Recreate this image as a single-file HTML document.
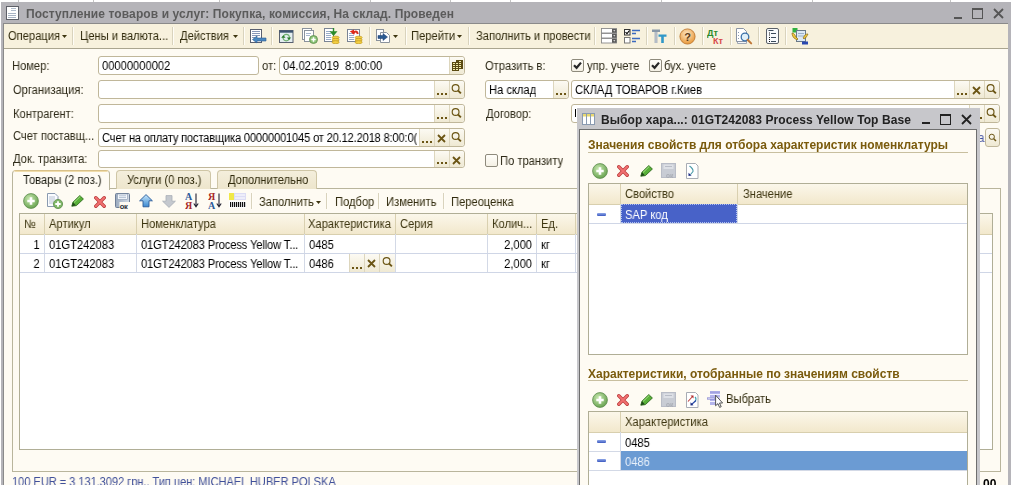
<!DOCTYPE html><html><head><meta charset="utf-8"><style>
html,body{margin:0;padding:0}
body{width:1011px;height:485px;overflow:hidden;position:relative;background:#ffffff;font:11px 'Liberation Sans', sans-serif}
.t{position:absolute;white-space:pre;will-change:transform}
.r{position:absolute;display:block}
</style></head><body>
<div class="r" style="left:18px;top:0px;width:1px;height:2px;background:#c4c4c4;"></div>
<div class="r" style="left:93px;top:0px;width:1px;height:2px;background:#c4c4c4;"></div>
<div class="r" style="left:219px;top:0px;width:1px;height:2px;background:#c4c4c4;"></div>
<div class="r" style="left:370px;top:0px;width:1px;height:2px;background:#c4c4c4;"></div>
<div class="r" style="left:450px;top:0px;width:1px;height:2px;background:#c4c4c4;"></div>
<div class="r" style="left:510px;top:0px;width:1px;height:2px;background:#c4c4c4;"></div>
<div class="r" style="left:661px;top:0px;width:1px;height:2px;background:#c4c4c4;"></div>
<div class="r" style="left:812px;top:0px;width:1px;height:2px;background:#c4c4c4;"></div>
<div class="r" style="left:950px;top:0px;width:1px;height:2px;background:#c4c4c4;"></div>
<div class="r" style="left:1px;top:2px;width:1010px;height:483px;background:#b5b4b9;"></div>
<div class="r" style="left:3px;top:23px;width:1005px;height:462px;background:#8a8a8a;"></div>
<div class="r" style="left:4px;top:24px;width:1004px;height:461px;background:#fefbf3;"></div>
<div class="r" style="left:4px;top:24px;width:1004px;height:24px;background:#f7f1dd;"></div>
<div class="r" style="left:4px;top:48px;width:1004px;height:1px;background:#aaa58f;"></div>
<svg class="r" style="left:6px;top:6px" width="14" height="14" viewBox="0 0 14 14"><rect x="0.5" y="0.5" width="12" height="13" fill="#fff" stroke="#5e6068"/><path d="M5 2.5h5M5 4.5h5" stroke="#b0bccc"/><path d="M2 7.5h8M2 9.5h8M2 11.5h8" stroke="#a8b4c4"/></svg>
<div class="t" style="left:26px;top:7.34px;font:bold 12px 'Liberation Sans', sans-serif;line-height:15px;color:#5b5b5b;letter-spacing:0.1px">Поступление товаров и услуг: Покупка, комиссия, На склад. Проведен</div>
<div class="r" style="left:954px;top:17px;width:8px;height:2px;background:#555;"></div>
<div class="r" style="left:972px;top:8px;width:11px;height:11px;border:1px solid #555;border-top-width:2px;box-sizing:border-box;"></div>
<svg class="r" style="left:993px;top:8px" width="11" height="11" viewBox="0 0 11 11"><path d="M1 1L10 10M10 1L1 10" stroke="#555" stroke-width="1.8" /></svg>
<div class="t" style="left:8px;top:29.34px;font:12px 'Liberation Sans', sans-serif;line-height:15px;color:#302a0c;transform:scaleX(0.93);transform-origin:left top;">Операция</div>
<svg class="r" style="left:62px;top:35px" width="5" height="3" viewBox="0 0 5 3"><path d="M0 0H5L2.5 3Z" fill="#3d3510"/></svg>
<div class="r" style="left:72px;top:27px;width:1px;height:18px;background:#d9d3bd;"></div>
<div class="r" style="left:73px;top:27px;width:1px;height:18px;background:#fffdf6;"></div>
<div class="t" style="left:80px;top:29.34px;font:12px 'Liberation Sans', sans-serif;line-height:15px;color:#302a0c;transform:scaleX(0.93);transform-origin:left top;">Цены и валюта...</div>
<div class="r" style="left:172px;top:27px;width:1px;height:18px;background:#d9d3bd;"></div>
<div class="r" style="left:173px;top:27px;width:1px;height:18px;background:#fffdf6;"></div>
<div class="t" style="left:180px;top:29.34px;font:12px 'Liberation Sans', sans-serif;line-height:15px;color:#302a0c;transform:scaleX(0.93);transform-origin:left top;">Действия</div>
<svg class="r" style="left:233px;top:35px" width="5" height="3" viewBox="0 0 5 3"><path d="M0 0H5L2.5 3Z" fill="#3d3510"/></svg>
<div class="r" style="left:243px;top:27px;width:1px;height:18px;background:#d9d3bd;"></div>
<div class="r" style="left:244px;top:27px;width:1px;height:18px;background:#fffdf6;"></div>
<svg class="r" style="left:249px;top:28px" width="18" height="16" viewBox="0 0 18 16"><rect x="1.5" y="1.5" width="11" height="13" fill="#fff" stroke="#5a6070"/><path d="M3 3.5h8M3 5.5h8M3 7.5h8M3 9.5h3" stroke="#8898b8" stroke-width="1"/><path d="M3.5 11.5L8 8V10H17V13H8V15z" fill="#4a88c0" stroke="#2a5a90" stroke-width=".6"/></svg>
<div class="r" style="left:271px;top:27px;width:1px;height:18px;background:#d9d3bd;"></div>
<div class="r" style="left:272px;top:27px;width:1px;height:18px;background:#fffdf6;"></div>
<svg class="r" style="left:279px;top:30px" width="15" height="13" viewBox="0 0 15 13"><rect x="0.5" y="0.5" width="13.5" height="12" fill="#e4eef0" stroke="#586070"/><rect x="0.5" y="0.5" width="13.5" height="2.2" fill="#3c5470"/><circle cx="7.2" cy="7.6" r="3.2" fill="none" stroke="#70b070" stroke-width="1.2"/><path d="M2.2 7.8L4.4 5.2 6.6 7.8z" fill="#2a7a2a"/><path d="M7.8 7.4L10 10 12.2 7.4z" fill="#2a7a2a"/></svg>
<svg class="r" style="left:302px;top:28px" width="16" height="16" viewBox="0 0 16 16"><rect x="0.5" y="0.5" width="9" height="11" fill="#fff" stroke="#8a929c"/><rect x="2.5" y="2.5" width="9" height="11" fill="#fff" stroke="#8a929c"/><path d="M4 5.5h5M4 7.5h4" stroke="#a8b8d0" stroke-width="1"/><circle cx="11.5" cy="11.5" r="4" fill="#8cc478" stroke="#5a8a4a" stroke-width=".8"/><path d="M9.3 11.5h4.4M11.5 9.3v4.4" stroke="#fff" stroke-width="1.5"/></svg>
<svg class="r" style="left:324px;top:28px" width="16" height="16" viewBox="0 0 16 16"><rect x="0.5" y="0.5" width="9" height="13" fill="#fff" stroke="#7a8494"/><path d="M2 3.5h5M2 5.5h5M2 7.5h5M2 9.5h5M2 11.5h5" stroke="#98acc8" stroke-width="1"/><path d="M9.5 0v4M7 4h5L9.5 7z" stroke="#2a8a2a" stroke-width="1.4" fill="#2a8a2a"/><ellipse cx="11.6" cy="9.6" rx="3.6" ry="1.5" fill="#f4d040" stroke="#b89020" stroke-width=".6"/><ellipse cx="11.6" cy="11.899999999999999" rx="3.6" ry="1.5" fill="#f4d040" stroke="#b89020" stroke-width=".6"/><ellipse cx="11.6" cy="14.2" rx="3.6" ry="1.5" fill="#f4d040" stroke="#b89020" stroke-width=".6"/></svg>
<svg class="r" style="left:347px;top:28px" width="16" height="16" viewBox="0 0 16 16"><rect x="0.5" y="1.5" width="12" height="12" fill="#fff" stroke="#7a8494"/><path d="M2 5.5h5M2 7.5h5M2 9.5h5M2 11.5h5" stroke="#98acc8" stroke-width="1"/><path d="M6 6C7.5 2.5 10 2.5 10.8 6" stroke="#d83020" stroke-width="2" fill="none"/><path d="M2.8 3.6L7 1.4 7.4 6.6z" fill="#e02818"/><ellipse cx="11.6" cy="9.6" rx="3.6" ry="1.5" fill="#f4d040" stroke="#b89020" stroke-width=".6"/><ellipse cx="11.6" cy="11.899999999999999" rx="3.6" ry="1.5" fill="#f4d040" stroke="#b89020" stroke-width=".6"/><ellipse cx="11.6" cy="14.2" rx="3.6" ry="1.5" fill="#f4d040" stroke="#b89020" stroke-width=".6"/></svg>
<div class="r" style="left:369px;top:27px;width:1px;height:18px;background:#d9d3bd;"></div>
<div class="r" style="left:370px;top:27px;width:1px;height:18px;background:#fffdf6;"></div>
<svg class="r" style="left:376px;top:29px" width="15" height="14" viewBox="0 0 15 14"><rect x="0.5" y="0.5" width="7" height="11" fill="#fff" stroke="#8a929c"/><path d="M4.5 3.5h6l3 3v7h-9z" fill="#fff" stroke="#8a929c"/><path d="M2 6.5h5V4.5l4.5 3.5L7 11.5V9.5H2z" fill="#2a5a90" stroke="#1a3a70" stroke-width=".5"/></svg>
<svg class="r" style="left:393px;top:35px" width="5" height="3" viewBox="0 0 5 3"><path d="M0 0H5L2.5 3Z" fill="#3d3510"/></svg>
<div class="r" style="left:405px;top:27px;width:1px;height:18px;background:#d9d3bd;"></div>
<div class="r" style="left:406px;top:27px;width:1px;height:18px;background:#fffdf6;"></div>
<div class="t" style="left:411px;top:29.34px;font:12px 'Liberation Sans', sans-serif;line-height:15px;color:#302a0c;transform:scaleX(0.93);transform-origin:left top;">Перейти</div>
<svg class="r" style="left:457px;top:35px" width="5" height="3" viewBox="0 0 5 3"><path d="M0 0H5L2.5 3Z" fill="#3d3510"/></svg>
<div class="r" style="left:468px;top:27px;width:1px;height:18px;background:#d9d3bd;"></div>
<div class="r" style="left:469px;top:27px;width:1px;height:18px;background:#fffdf6;"></div>
<div class="t" style="left:476px;top:29.34px;font:12px 'Liberation Sans', sans-serif;line-height:15px;color:#302a0c;transform:scaleX(0.93);transform-origin:left top;">Заполнить и провести</div>
<div class="r" style="left:594px;top:27px;width:1px;height:18px;background:#d9d3bd;"></div>
<div class="r" style="left:595px;top:27px;width:1px;height:18px;background:#fffdf6;"></div>
<svg class="r" style="left:601px;top:28px" width="17" height="16" viewBox="0 0 17 16"><rect x="0.5" y="0.5" width="15" height="4.5" fill="#fff" stroke="#8a8a8a" stroke-width=".9"/><rect x="11" y="1" width="4.5" height="3.8" fill="#5a5a5a"/><path d="M12.2 2.2h2.2L13.3 3.6z" fill="#fff"/><rect x="0.5" y="5.5" width="15" height="4.5" fill="#fff" stroke="#8a8a8a" stroke-width=".9"/><rect x="11" y="6" width="4.5" height="3.8" fill="#5a5a5a"/><path d="M12.2 7.2h2.2L13.3 8.6z" fill="#fff"/><rect x="0.5" y="10.5" width="15" height="4.5" fill="#fff" stroke="#8a8a8a" stroke-width=".9"/><rect x="11" y="11" width="4.5" height="3.8" fill="#5a5a5a"/><path d="M12.2 12.2h2.2L13.3 13.6z" fill="#fff"/></svg>
<svg class="r" style="left:624px;top:29px" width="17" height="15" viewBox="0 0 17 15"><rect x="0.5" y="0.5" width="5.5" height="5.5" fill="#fff" stroke="#333"/><path d="M1.5 3.2l1.5 1.5 2.5-3.2" stroke="#000" stroke-width="1.1" fill="none"/><rect x="0.5" y="8.5" width="5.5" height="5.5" fill="#fff" stroke="#777"/><path d="M8 1.5h8M8 4.5h4M8 9.5h8M8 12.5h4" stroke="#3a6ac0" stroke-width="1.5"/></svg>
<div class="r" style="left:646px;top:27px;width:1px;height:18px;background:#d9d3bd;"></div>
<div class="r" style="left:647px;top:27px;width:1px;height:18px;background:#fffdf6;"></div>
<svg class="r" style="left:652px;top:29px" width="15" height="15" viewBox="0 0 15 15"><path d="M0 0.5h8v2.5H5.3V14H2.7V3H0z" fill="#8898a8"/><path d="M6.5 5.5h8v2.2H11.8V14H9.2V7.7H6.5z" fill="#3098c8"/><path d="M2.7 3h2.6v11H2.7z" fill="#c8ccd4" opacity=".7"/></svg>
<div class="r" style="left:674px;top:27px;width:1px;height:18px;background:#d9d3bd;"></div>
<div class="r" style="left:675px;top:27px;width:1px;height:18px;background:#fffdf6;"></div>
<svg class="r" style="left:679px;top:28px" width="17" height="17" viewBox="0 0 17 17"><defs><radialGradient id="qg" cx="45%" cy="35%" r="65%"><stop offset="0" stop-color="#fde8c8"/><stop offset="1" stop-color="#e89838"/></radialGradient></defs><circle cx="8.5" cy="8.5" r="7.6" fill="url(#qg)" stroke="#b87028" stroke-width=".8"/><text x="8.5" y="12.6" font-family="Liberation Sans" font-weight="bold" font-size="11" text-anchor="middle" fill="#5a3a18">?</text></svg>
<div class="r" style="left:702px;top:27px;width:1px;height:18px;background:#d9d3bd;"></div>
<div class="r" style="left:703px;top:27px;width:1px;height:18px;background:#fffdf6;"></div>
<svg class="r" style="left:707px;top:28px" width="17" height="17" viewBox="0 0 17 17"><text x="0" y="7.5" font-family="Liberation Sans" font-weight="bold" font-size="9" fill="#2a8a2a">Дт</text><text x="6" y="15.5" font-family="Liberation Sans" font-weight="bold" font-size="9" fill="#d84848">Кт</text></svg>
<div class="r" style="left:730px;top:27px;width:1px;height:18px;background:#d9d3bd;"></div>
<div class="r" style="left:731px;top:27px;width:1px;height:18px;background:#fffdf6;"></div>
<svg class="r" style="left:736px;top:28px" width="17" height="17" viewBox="0 0 17 17"><path d="M1.5 2.5h6l3 3v10h-9z" fill="#f4f6f8" stroke="#a0a8b4"/><path d="M0.5 0.5h7l3 3v10h-10z" fill="#fff" stroke="#8a94a4"/><path d="M2 4.5h1M2 7.5h1M2 10.5h1" stroke="#8a9ab0"/><circle cx="9" cy="9" r="3.8" fill="#e0f0fa" stroke="#3a70a8" stroke-width="1.3"/><path d="M11.6 11.8l3.6 3.6" stroke="#c07838" stroke-width="2" stroke-linecap="round"/></svg>
<div class="r" style="left:758px;top:27px;width:1px;height:18px;background:#d9d3bd;"></div>
<div class="r" style="left:759px;top:27px;width:1px;height:18px;background:#fffdf6;"></div>
<svg class="r" style="left:765px;top:28px" width="15" height="16" viewBox="0 0 15 16"><rect x="1.5" y="0.5" width="12" height="15" rx="1.5" fill="#f8fafc" stroke="#5a6068"/><path d="M3.5 2.5h5" stroke="#3a4a5a" stroke-width="1"/><path d="M4 5h1M4 7h1M4 9.5h1M4 11.5h1M4 13.5h1" stroke="#111" stroke-width="1"/><path d="M6 5.5h5M6 9.5h5M6 13.5h5" stroke="#3a4a5a" stroke-width="1"/></svg>
<div class="r" style="left:785px;top:27px;width:1px;height:18px;background:#d9d3bd;"></div>
<div class="r" style="left:786px;top:27px;width:1px;height:18px;background:#fffdf6;"></div>
<svg class="r" style="left:791px;top:28px" width="18" height="17" viewBox="0 0 18 17"><rect x="1.5" y="0" width="5" height="4.5" fill="#30b040"/><rect x="5.5" y="2.5" width="9" height="11" fill="#dce8f4" stroke="#6a7a8a"/><path d="M7 5.5h6M7 8h6" stroke="#9ab0c8"/><path d="M1 5c2 0 3 2 4 4l2 2-1 1-3-2C2 9 1 7 1 5z" fill="#f0c838" stroke="#8a6a18" stroke-width=".7"/><path d="M17 6c-1 2-2 4-4 5l-1-1 2-3c1-1 2-1 3-1z" fill="#f0c838" stroke="#8a6a18" stroke-width=".7"/><path d="M11 13.5h6v3h-6z" fill="#2a48b0"/></svg>
<div class="t" style="left:12px;top:59.34px;font:12px 'Liberation Sans', sans-serif;line-height:15px;color:#2e2a18;transform:scaleX(0.93);transform-origin:left top;">Номер:</div>
<div class="r" style="left:98px;top:56px;width:161px;height:19px;background:#fff;border:1px solid #c0b79a;border-radius:3px;box-sizing:border-box;"></div>
<div class="r" style="left:99px;top:57px;width:159px;height:17px;overflow:hidden">
<div class="t" style="left:3px;top:2.34px;font:12px 'Liberation Sans', sans-serif;line-height:15px;color:#000;transform:scaleX(0.93);transform-origin:left top;">00000000002</div>
</div>
<div class="t" style="left:262px;top:59.34px;font:12px 'Liberation Sans', sans-serif;line-height:15px;color:#2e2a18;transform:scaleX(0.93);transform-origin:left top;">от:</div>
<div class="r" style="left:279px;top:56px;width:186px;height:19px;background:#fff;border:1px solid #c0b79a;border-radius:3px;box-sizing:border-box;"></div>
<div class="r" style="left:449px;top:57px;width:15px;height:17px;background:linear-gradient(#fcfaf3,#efe9d3);border-radius:0 3px 3px 0;border-left:1px solid #ddd6bd;box-sizing:border-box;"></div>
<svg class="r" style="left:452px;top:60px" width="11" height="11" viewBox="0 0 11 11"><rect x="4" y="0" width="7" height="9" fill="#5a4a12"/><rect x="0" y="2" width="7" height="9" fill="#5a4a12"/><rect x="7" y="1" width="2" height="1" fill="#f2eaa8"/><rect x="1" y="3" width="2" height="1" fill="#f2eaa8"/><rect x="4" y="3" width="2" height="1" fill="#f2eaa8"/><rect x="7" y="3" width="2" height="1" fill="#f2eaa8"/><rect x="1" y="5" width="2" height="1" fill="#f2eaa8"/><rect x="4" y="5" width="2" height="1" fill="#f2eaa8"/><rect x="7" y="5" width="2" height="1" fill="#f2eaa8"/><rect x="1" y="7" width="2" height="1" fill="#f2eaa8"/><rect x="4" y="7" width="2" height="1" fill="#f2eaa8"/><rect x="7" y="7" width="2" height="1" fill="#f2eaa8"/><rect x="1" y="9" width="2" height="1" fill="#f2eaa8"/><rect x="4" y="9" width="2" height="1" fill="#f2eaa8"/></svg>
<div class="r" style="left:280px;top:57px;width:169px;height:17px;overflow:hidden">
<div class="t" style="left:3px;top:2.34px;font:12px 'Liberation Sans', sans-serif;line-height:15px;color:#000;transform:scaleX(0.93);transform-origin:left top;">04.02.2019  8:00:00</div>
</div>
<div class="t" style="left:485px;top:59.34px;font:12px 'Liberation Sans', sans-serif;line-height:15px;color:#2e2a18;transform:scaleX(0.93);transform-origin:left top;">Отразить в:</div>
<div class="r" style="left:571px;top:59px;width:13px;height:13px;background:linear-gradient(#fffefa,#f4f0e4);border:1px solid #8e8a7c;border-radius:2px;box-sizing:border-box;"></div>
<svg class="r" style="left:573px;top:61px" width="9" height="9" viewBox="0 0 9 9"><path d="M1 4.2L3.6 6.8L8 1.6" stroke="#282828" stroke-width="2.2" fill="none"/></svg>
<div class="t" style="left:587px;top:59.34px;font:12px 'Liberation Sans', sans-serif;line-height:15px;color:#2e2a18;transform:scaleX(0.93);transform-origin:left top;">упр. учете</div>
<div class="r" style="left:649px;top:59px;width:13px;height:13px;background:linear-gradient(#fffefa,#f4f0e4);border:1px solid #8e8a7c;border-radius:2px;box-sizing:border-box;"></div>
<svg class="r" style="left:651px;top:61px" width="9" height="9" viewBox="0 0 9 9"><path d="M1 4.2L3.6 6.8L8 1.6" stroke="#282828" stroke-width="2.2" fill="none"/></svg>
<div class="t" style="left:664px;top:59.34px;font:12px 'Liberation Sans', sans-serif;line-height:15px;color:#2e2a18;transform:scaleX(0.93);transform-origin:left top;">бух. учете</div>
<div class="t" style="left:13px;top:83.34px;font:12px 'Liberation Sans', sans-serif;line-height:15px;color:#2e2a18;transform:scaleX(0.93);transform-origin:left top;">Организация:</div>
<div class="r" style="left:98px;top:80px;width:367px;height:19px;background:#fff;border:1px solid #c0b79a;border-radius:3px;box-sizing:border-box;"></div>
<div class="r" style="left:449px;top:81px;width:15px;height:17px;background:linear-gradient(#fcfaf3,#efe9d3);border-radius:0 3px 3px 0;border-left:1px solid #ddd6bd;box-sizing:border-box;"></div>
<svg class="r" style="left:451px;top:84px" width="11" height="11" viewBox="0 0 11 11"><circle cx="4.6" cy="4" r="3.4" fill="none" stroke="#6b5514" stroke-width="1.15"/><path d="M7.1 6.6L9.9 9.4" stroke="#6b5514" stroke-width="1.9"/></svg>
<div class="r" style="left:434px;top:81px;width:15px;height:17px;background:linear-gradient(#fcfaf3,#efe9d3);border-left:1px solid #ddd6bd;box-sizing:border-box;"></div>
<svg class="r" style="left:437px;top:93px" width="11" height="2" viewBox="0 0 11 2"><rect x="0" y="0" width="2" height="2" fill="#6b5514"/><rect x="4" y="0" width="2" height="2" fill="#6b5514"/><rect x="8" y="0" width="2" height="2" fill="#6b5514"/></svg>
<div class="r" style="left:485px;top:80px;width:84px;height:19px;background:#fff;border:1px solid #c0b79a;border-radius:3px;box-sizing:border-box;"></div>
<div class="r" style="left:553px;top:81px;width:15px;height:17px;background:linear-gradient(#fcfaf3,#efe9d3);border-radius:0 3px 3px 0;border-left:1px solid #ddd6bd;box-sizing:border-box;"></div>
<svg class="r" style="left:556px;top:93px" width="11" height="2" viewBox="0 0 11 2"><rect x="0" y="0" width="2" height="2" fill="#6b5514"/><rect x="4" y="0" width="2" height="2" fill="#6b5514"/><rect x="8" y="0" width="2" height="2" fill="#6b5514"/></svg>
<div class="r" style="left:486px;top:81px;width:67px;height:17px;overflow:hidden">
<div class="t" style="left:3px;top:2.34px;font:12px 'Liberation Sans', sans-serif;line-height:15px;color:#000;transform:scaleX(0.93);transform-origin:left top;">На склад</div>
</div>
<div class="r" style="left:571px;top:80px;width:429px;height:19px;background:#fff;border:1px solid #c0b79a;border-radius:3px;box-sizing:border-box;"></div>
<div class="r" style="left:984px;top:81px;width:15px;height:17px;background:linear-gradient(#fcfaf3,#efe9d3);border-radius:0 3px 3px 0;border-left:1px solid #ddd6bd;box-sizing:border-box;"></div>
<svg class="r" style="left:986px;top:84px" width="11" height="11" viewBox="0 0 11 11"><circle cx="4.6" cy="4" r="3.4" fill="none" stroke="#6b5514" stroke-width="1.15"/><path d="M7.1 6.6L9.9 9.4" stroke="#6b5514" stroke-width="1.9"/></svg>
<div class="r" style="left:969px;top:81px;width:15px;height:17px;background:linear-gradient(#fcfaf3,#efe9d3);border-left:1px solid #ddd6bd;box-sizing:border-box;"></div>
<svg class="r" style="left:972px;top:86px" width="9" height="9" viewBox="0 0 9 9"><path d="M1 1L8 8M8 1L1 8" stroke="#6b5514" stroke-width="1.8" /></svg>
<div class="r" style="left:954px;top:81px;width:15px;height:17px;background:linear-gradient(#fcfaf3,#efe9d3);border-left:1px solid #ddd6bd;box-sizing:border-box;"></div>
<svg class="r" style="left:957px;top:93px" width="11" height="2" viewBox="0 0 11 2"><rect x="0" y="0" width="2" height="2" fill="#6b5514"/><rect x="4" y="0" width="2" height="2" fill="#6b5514"/><rect x="8" y="0" width="2" height="2" fill="#6b5514"/></svg>
<div class="r" style="left:572px;top:81px;width:382px;height:17px;overflow:hidden">
<div class="t" style="left:3px;top:2.34px;font:12px 'Liberation Sans', sans-serif;line-height:15px;color:#000;transform:scaleX(0.93);transform-origin:left top;">СКЛАД ТОВАРОВ г.Киев</div>
</div>
<div class="t" style="left:13px;top:107.34px;font:12px 'Liberation Sans', sans-serif;line-height:15px;color:#2e2a18;transform:scaleX(0.93);transform-origin:left top;">Контрагент:</div>
<div class="r" style="left:98px;top:104px;width:367px;height:19px;background:#fff;border:1px solid #c0b79a;border-radius:3px;box-sizing:border-box;"></div>
<div class="r" style="left:449px;top:105px;width:15px;height:17px;background:linear-gradient(#fcfaf3,#efe9d3);border-radius:0 3px 3px 0;border-left:1px solid #ddd6bd;box-sizing:border-box;"></div>
<svg class="r" style="left:451px;top:108px" width="11" height="11" viewBox="0 0 11 11"><circle cx="4.6" cy="4" r="3.4" fill="none" stroke="#6b5514" stroke-width="1.15"/><path d="M7.1 6.6L9.9 9.4" stroke="#6b5514" stroke-width="1.9"/></svg>
<div class="r" style="left:434px;top:105px;width:15px;height:17px;background:linear-gradient(#fcfaf3,#efe9d3);border-left:1px solid #ddd6bd;box-sizing:border-box;"></div>
<svg class="r" style="left:437px;top:117px" width="11" height="2" viewBox="0 0 11 2"><rect x="0" y="0" width="2" height="2" fill="#6b5514"/><rect x="4" y="0" width="2" height="2" fill="#6b5514"/><rect x="8" y="0" width="2" height="2" fill="#6b5514"/></svg>
<div class="t" style="left:486px;top:107.34px;font:12px 'Liberation Sans', sans-serif;line-height:15px;color:#2e2a18;transform:scaleX(0.93);transform-origin:left top;">Договор:</div>
<div class="r" style="left:571px;top:104px;width:429px;height:19px;background:#fff;border:1px solid #c0b79a;border-radius:3px;box-sizing:border-box;"></div>
<div class="r" style="left:984px;top:105px;width:15px;height:17px;background:linear-gradient(#fcfaf3,#efe9d3);border-radius:0 3px 3px 0;border-left:1px solid #ddd6bd;box-sizing:border-box;"></div>
<svg class="r" style="left:986px;top:108px" width="11" height="11" viewBox="0 0 11 11"><circle cx="4.6" cy="4" r="3.4" fill="none" stroke="#6b5514" stroke-width="1.15"/><path d="M7.1 6.6L9.9 9.4" stroke="#6b5514" stroke-width="1.9"/></svg>
<div class="r" style="left:969px;top:105px;width:15px;height:17px;background:linear-gradient(#fcfaf3,#efe9d3);border-left:1px solid #ddd6bd;box-sizing:border-box;"></div>
<svg class="r" style="left:972px;top:117px" width="11" height="2" viewBox="0 0 11 2"><rect x="0" y="0" width="2" height="2" fill="#6b5514"/><rect x="4" y="0" width="2" height="2" fill="#6b5514"/><rect x="8" y="0" width="2" height="2" fill="#6b5514"/></svg>
<div class="r" style="left:575px;top:109px;width:1px;height:8px;background:#000;"></div>
<div class="t" style="left:13px;top:129.34px;font:12px 'Liberation Sans', sans-serif;line-height:15px;color:#2e2a18;transform:scaleX(0.93);transform-origin:left top;">Счет поставщ...</div>
<div class="r" style="left:98px;top:128px;width:367px;height:19px;background:#fff;border:1px solid #c0b79a;border-radius:3px;box-sizing:border-box;"></div>
<div class="r" style="left:449px;top:129px;width:15px;height:17px;background:linear-gradient(#fcfaf3,#efe9d3);border-radius:0 3px 3px 0;border-left:1px solid #ddd6bd;box-sizing:border-box;"></div>
<svg class="r" style="left:451px;top:132px" width="11" height="11" viewBox="0 0 11 11"><circle cx="4.6" cy="4" r="3.4" fill="none" stroke="#6b5514" stroke-width="1.15"/><path d="M7.1 6.6L9.9 9.4" stroke="#6b5514" stroke-width="1.9"/></svg>
<div class="r" style="left:434px;top:129px;width:15px;height:17px;background:linear-gradient(#fcfaf3,#efe9d3);border-left:1px solid #ddd6bd;box-sizing:border-box;"></div>
<svg class="r" style="left:437px;top:134px" width="9" height="9" viewBox="0 0 9 9"><path d="M1 1L8 8M8 1L1 8" stroke="#6b5514" stroke-width="1.8" /></svg>
<div class="r" style="left:419px;top:129px;width:15px;height:17px;background:linear-gradient(#fcfaf3,#efe9d3);border-left:1px solid #ddd6bd;box-sizing:border-box;"></div>
<svg class="r" style="left:422px;top:141px" width="11" height="2" viewBox="0 0 11 2"><rect x="0" y="0" width="2" height="2" fill="#6b5514"/><rect x="4" y="0" width="2" height="2" fill="#6b5514"/><rect x="8" y="0" width="2" height="2" fill="#6b5514"/></svg>
<div class="r" style="left:99px;top:129px;width:320px;height:17px;overflow:hidden">
<div class="t" style="left:3px;top:2.34px;font:12px 'Liberation Sans', sans-serif;line-height:15px;color:#000;transform:scaleX(0.93);transform-origin:left top;letter-spacing:-0.2px">Счет на оплату поставщика 00000001045 от 20.12.2018 8:00:0(</div>
</div>
<div class="t" style="left:978px;top:131.34px;font:12px 'Liberation Sans', sans-serif;line-height:15px;color:#4050a0;transform:scaleX(0.93);transform-origin:left top;">а</div>
<div class="r" style="left:985px;top:128px;width:15px;height:19px;background:linear-gradient(#fcfaf3,#efe9d3);border:1px solid #c0b79a;border-radius:3px;box-sizing:border-box;"></div>
<svg class="r" style="left:988px;top:133px" width="9" height="9" viewBox="0 0 9 9"><circle cx="3.8" cy="3.8" r="2.6" fill="none" stroke="#6b5514" stroke-width="1"/><path d="M5.7 5.7L8 8" stroke="#6b5514" stroke-width="1.5"/></svg>
<div class="t" style="left:13px;top:152.34px;font:12px 'Liberation Sans', sans-serif;line-height:15px;color:#2e2a18;transform:scaleX(0.93);transform-origin:left top;">Док. транзита:</div>
<div class="r" style="left:98px;top:150px;width:367px;height:18px;background:#fff;border:1px solid #c0b79a;border-radius:3px;box-sizing:border-box;"></div>
<div class="r" style="left:449px;top:151px;width:15px;height:16px;background:linear-gradient(#fcfaf3,#efe9d3);border-radius:0 3px 3px 0;border-left:1px solid #ddd6bd;box-sizing:border-box;"></div>
<svg class="r" style="left:452px;top:156px" width="9" height="9" viewBox="0 0 9 9"><path d="M1 1L8 8M8 1L1 8" stroke="#6b5514" stroke-width="1.8" /></svg>
<div class="r" style="left:434px;top:151px;width:15px;height:16px;background:linear-gradient(#fcfaf3,#efe9d3);border-left:1px solid #ddd6bd;box-sizing:border-box;"></div>
<svg class="r" style="left:437px;top:162px" width="11" height="2" viewBox="0 0 11 2"><rect x="0" y="0" width="2" height="2" fill="#6b5514"/><rect x="4" y="0" width="2" height="2" fill="#6b5514"/><rect x="8" y="0" width="2" height="2" fill="#6b5514"/></svg>
<div class="r" style="left:485px;top:154px;width:13px;height:13px;background:linear-gradient(#fffefa,#f4f0e4);border:1px solid #8e8a7c;border-radius:2px;box-sizing:border-box;"></div>
<div class="t" style="left:500px;top:154.34px;font:12px 'Liberation Sans', sans-serif;line-height:15px;color:#2e2a18;transform:scaleX(0.93);transform-origin:left top;">По транзиту</div>
<div class="r" style="left:12px;top:188px;width:989px;height:284px;border:1px solid #b9b59c;box-sizing:border-box;"></div>
<div class="r" style="left:116px;top:170px;width:95px;height:19px;background:linear-gradient(#f4eedc,#ede5cc);border:1px solid #cfc6a6;border-bottom:none;border-radius:4px 4px 0 0;box-sizing:border-box;"></div>
<div class="t" style="left:127px;top:173.34px;font:12px 'Liberation Sans', sans-serif;line-height:15px;color:#302a0c;transform:scaleX(0.93);transform-origin:left top;">Услуги (0 поз.)</div>
<div class="r" style="left:217px;top:170px;width:100px;height:19px;background:linear-gradient(#f4eedc,#ede5cc);border:1px solid #cfc6a6;border-bottom:none;border-radius:4px 4px 0 0;box-sizing:border-box;"></div>
<div class="t" style="left:228px;top:173.34px;font:12px 'Liberation Sans', sans-serif;line-height:15px;color:#302a0c;transform:scaleX(0.93);transform-origin:left top;">Дополнительно</div>
<div class="r" style="left:12px;top:170px;width:98px;height:20px;background:#fefbf3;border:1px solid #b9b59c;border-top:1px solid #d8c088;border-bottom:none;border-radius:4px 4px 0 0;box-sizing:border-box;"></div>
<div class="r" style="left:15px;top:171px;width:92px;height:1px;background:#f0dcaa;"></div>
<div class="t" style="left:23px;top:173.34px;font:12px 'Liberation Sans', sans-serif;line-height:15px;color:#1a1a10;transform:scaleX(0.93);transform-origin:left top;">Товары (2 поз.)</div>
<svg class="r" style="left:23px;top:193px" width="16" height="16" viewBox="0 0 16 16"><defs><radialGradient id="gp" cx="40%" cy="35%" r="70%"><stop offset="0" stop-color="#c8e8b0"/><stop offset="1" stop-color="#64a04c"/></radialGradient></defs><circle cx="8" cy="8" r="7.4" fill="url(#gp)" stroke="#5c8c4c" stroke-width=".8"/><path d="M4.3 8h7.4M8 4.3v7.4" stroke="#fff" stroke-width="2.6"/></svg>
<svg class="r" style="left:47px;top:193px" width="16" height="16" viewBox="0 0 16 16"><path d="M0.5 0.5h7.5l3 3v10h-10.5z" fill="#fafcff" stroke="#8a9ab0"/><path d="M2 4h6M2 6h6M2 8h5M2 10h4" stroke="#a8b4c8" stroke-width=".8"/><circle cx="11" cy="11" r="4.6" fill="#80b868" stroke="#5a8a4a" stroke-width=".8"/><path d="M8.3 11h5.4M11 8.3v5.4" stroke="#fff" stroke-width="1.8"/></svg>
<svg class="r" style="left:71px;top:195px" width="13" height="12" viewBox="0 0 13 12"><path d="M0.8 11.2L2 7.2 8.8 0.6 12.4 4 5.4 10.6z" fill="#58b038" stroke="#2c6a1c" stroke-width=".9"/><path d="M3 7.5L9.5 1.2" stroke="#a8e088" stroke-width="1"/><path d="M0.8 11.2l1.2-4 2.8 3z" fill="#204a18"/></svg>
<svg class="r" style="left:94px;top:196px" width="12" height="12" viewBox="0 0 12 12"><path d="M1.8 1.8L10.2 10.2M10.2 1.8L1.8 10.2" stroke="#b83838" stroke-width="3.4" stroke-linecap="round"/><path d="M1.8 1.8L10.2 10.2M10.2 1.8L1.8 10.2" stroke="#f07070" stroke-width="2" stroke-linecap="round"/></svg>
<svg class="r" style="left:115px;top:193px" width="16" height="16" viewBox="0 0 16 16"><defs><linearGradient id="fl" x1="0" y1="0" x2="1" y2="0"><stop offset="0" stop-color="#9aaabe"/><stop offset="1" stop-color="#d4dce6"/></linearGradient></defs><rect x="0.5" y="0.5" width="14" height="14" rx="1" fill="url(#fl)" stroke="#6e7e96"/><rect x="2.5" y="1" width="10" height="5.5" fill="#f4f8fc" stroke="#8898b0" stroke-width=".6"/><path d="M4 2.8h7M4 4.6h7" stroke="#98a8c0" stroke-width=".7"/><rect x="4.5" y="9" width="11.5" height="7" fill="#fefbf3"/><text x="4.8" y="15.6" font-family="Liberation Sans" font-weight="bold" font-size="7.5" fill="#262c36" letter-spacing="-0.3">ок</text></svg>
<svg class="r" style="left:139px;top:194px" width="14" height="14" viewBox="0 0 14 14"><defs><linearGradient id="ua" x1="0" y1="0" x2="0" y2="1"><stop offset="0" stop-color="#c8e8fc"/><stop offset="1" stop-color="#3a88d0"/></linearGradient></defs><path d="M7 0.6L13.4 6.8H10v6H4v-6H0.6z" fill="url(#ua)" stroke="#2a5a98" stroke-width=".9"/></svg>
<svg class="r" style="left:162px;top:195px" width="14" height="13" viewBox="0 0 14 13"><path d="M7 12.4L13.4 6.2H10V0.6H4V6.2H0.6z" fill="#c4c8ce" stroke="#a8aeb6" stroke-width=".8"/></svg>
<svg class="r" style="left:185px;top:192px" width="16" height="17" viewBox="0 0 16 17"><text x="0" y="8" font-family="Liberation Serif" font-weight="bold" font-size="10" fill="#2a5a9a">A</text><text x="0" y="16.5" font-family="Liberation Serif" font-weight="bold" font-size="10" fill="#a82828">Я</text><path d="M11 1.5v13M8.8 11.5l2.2 3.2 2.2-3.2" stroke="#223" stroke-width="1.1" fill="none"/></svg>
<svg class="r" style="left:208px;top:192px" width="16" height="17" viewBox="0 0 16 17"><text x="0" y="8" font-family="Liberation Serif" font-weight="bold" font-size="10" fill="#a82828">Я</text><text x="0" y="16.5" font-family="Liberation Serif" font-weight="bold" font-size="10" fill="#2a5a9a">A</text><path d="M11 1.5v13M8.8 11.5l2.2 3.2 2.2-3.2" stroke="#223" stroke-width="1.1" fill="none"/></svg>
<svg class="r" style="left:229px;top:193px" width="17" height="16" viewBox="0 0 17 16"><rect x="0" y="0" width="17" height="7" fill="#dcdcf4"/><rect x="0" y="0" width="5" height="7" fill="#f0e848"/><path d="M6 2h10M6 5h10" stroke="#fff" stroke-width="1"/><rect x="0" y="8" width="17" height="7" fill="#fff"/><rect x="1" y="9" width="1.2" height="5" fill="#111"/><rect x="3" y="9" width="1.2" height="5" fill="#111"/><rect x="5" y="9" width="1.2" height="5" fill="#111"/><rect x="7" y="9" width="1.2" height="5" fill="#111"/><rect x="9" y="9" width="1.2" height="5" fill="#111"/><rect x="11" y="9" width="1.2" height="5" fill="#111"/><rect x="13" y="9" width="1.2" height="5" fill="#111"/><rect x="15" y="9" width="1.2" height="5" fill="#111"/></svg>
<div class="r" style="left:251px;top:193px;width:1px;height:16px;background:#d9d3bd;"></div>
<div class="r" style="left:252px;top:193px;width:1px;height:16px;background:#fffdf6;"></div>
<div class="t" style="left:259px;top:195.34px;font:12px 'Liberation Sans', sans-serif;line-height:15px;color:#302a0c;transform:scaleX(0.93);transform-origin:left top;">Заполнить</div>
<svg class="r" style="left:316px;top:201px" width="5" height="3" viewBox="0 0 5 3"><path d="M0 0H5L2.5 3Z" fill="#3d3510"/></svg>
<div class="r" style="left:326px;top:193px;width:1px;height:16px;background:#d9d3bd;"></div>
<div class="r" style="left:327px;top:193px;width:1px;height:16px;background:#fffdf6;"></div>
<div class="t" style="left:335px;top:195.34px;font:12px 'Liberation Sans', sans-serif;line-height:15px;color:#302a0c;transform:scaleX(0.93);transform-origin:left top;">Подбор</div>
<div class="r" style="left:378px;top:193px;width:1px;height:16px;background:#d9d3bd;"></div>
<div class="r" style="left:379px;top:193px;width:1px;height:16px;background:#fffdf6;"></div>
<div class="t" style="left:386px;top:195.34px;font:12px 'Liberation Sans', sans-serif;line-height:15px;color:#302a0c;transform:scaleX(0.93);transform-origin:left top;">Изменить</div>
<div class="r" style="left:443px;top:193px;width:1px;height:16px;background:#d9d3bd;"></div>
<div class="r" style="left:444px;top:193px;width:1px;height:16px;background:#fffdf6;"></div>
<div class="t" style="left:451px;top:195.34px;font:12px 'Liberation Sans', sans-serif;line-height:15px;color:#302a0c;transform:scaleX(0.93);transform-origin:left top;">Переоценка</div>
<div class="r" style="left:19px;top:213px;width:974px;height:237px;background:#fff;border:1px solid #b0ae96;box-sizing:border-box;"></div>
<div class="r" style="left:20px;top:214px;width:972px;height:21px;background:linear-gradient(#fbf7ea,#f2e8cc);border-bottom:1px solid #d8cfae;box-sizing:border-box;"></div>
<div class="r" style="left:44px;top:214px;width:1px;height:20px;background:#d9d0b0;"></div>
<div class="r" style="left:44px;top:234px;width:1px;height:38px;background:#d3d9e6;"></div>
<div class="r" style="left:136px;top:214px;width:1px;height:20px;background:#d9d0b0;"></div>
<div class="r" style="left:136px;top:234px;width:1px;height:38px;background:#d3d9e6;"></div>
<div class="r" style="left:304px;top:214px;width:1px;height:20px;background:#d9d0b0;"></div>
<div class="r" style="left:304px;top:234px;width:1px;height:38px;background:#d3d9e6;"></div>
<div class="r" style="left:395px;top:214px;width:1px;height:20px;background:#d9d0b0;"></div>
<div class="r" style="left:395px;top:234px;width:1px;height:38px;background:#d3d9e6;"></div>
<div class="r" style="left:487px;top:214px;width:1px;height:20px;background:#d9d0b0;"></div>
<div class="r" style="left:487px;top:234px;width:1px;height:38px;background:#d3d9e6;"></div>
<div class="r" style="left:536px;top:214px;width:1px;height:20px;background:#d9d0b0;"></div>
<div class="r" style="left:536px;top:234px;width:1px;height:38px;background:#d3d9e6;"></div>
<div class="r" style="left:575px;top:214px;width:1px;height:20px;background:#d9d0b0;"></div>
<div class="r" style="left:575px;top:234px;width:1px;height:38px;background:#d3d9e6;"></div>
<div class="r" style="left:20px;top:253px;width:972px;height:1px;background:#cfd6e6;"></div>
<div class="r" style="left:20px;top:272px;width:972px;height:1px;background:#cfd6e6;"></div>
<div class="t" style="left:24px;top:217.34px;font:12px 'Liberation Sans', sans-serif;line-height:15px;color:#3d3510;transform:scaleX(0.93);transform-origin:left top;">№</div>
<div class="t" style="left:49px;top:217.34px;font:12px 'Liberation Sans', sans-serif;line-height:15px;color:#3d3510;transform:scaleX(0.93);transform-origin:left top;">Артикул</div>
<div class="t" style="left:141px;top:217.34px;font:12px 'Liberation Sans', sans-serif;line-height:15px;color:#3d3510;transform:scaleX(0.93);transform-origin:left top;">Номенклатура</div>
<div class="t" style="left:308px;top:217.34px;font:12px 'Liberation Sans', sans-serif;line-height:15px;color:#3d3510;transform:scaleX(0.93);transform-origin:left top;">Характеристика</div>
<div class="t" style="left:400px;top:217.34px;font:12px 'Liberation Sans', sans-serif;line-height:15px;color:#3d3510;transform:scaleX(0.93);transform-origin:left top;">Серия</div>
<div class="t" style="left:492px;top:217.34px;font:12px 'Liberation Sans', sans-serif;line-height:15px;color:#3d3510;transform:scaleX(0.93);transform-origin:left top;">Колич...</div>
<div class="t" style="left:541px;top:217.34px;font:12px 'Liberation Sans', sans-serif;line-height:15px;color:#3d3510;transform:scaleX(0.93);transform-origin:left top;">Ед.</div>
<div class="t" style="right:971px;top:238.34px;font:12px 'Liberation Sans', sans-serif;line-height:15px;color:#000;transform:scaleX(0.93);transform-origin:right top;">1</div>
<div class="t" style="left:49px;top:238.34px;font:12px 'Liberation Sans', sans-serif;line-height:15px;color:#000;transform:scaleX(0.93);transform-origin:left top;">01GT242083</div>
<div class="t" style="left:141px;top:238.34px;font:12px 'Liberation Sans', sans-serif;line-height:15px;color:#000;transform:scaleX(0.93);transform-origin:left top;letter-spacing:-0.14px">01GT242083 Process Yellow T...</div>
<div class="t" style="left:309px;top:238.34px;font:12px 'Liberation Sans', sans-serif;line-height:15px;color:#000;transform:scaleX(0.93);transform-origin:left top;">0485</div>
<div class="t" style="right:479px;top:238.34px;font:12px 'Liberation Sans', sans-serif;line-height:15px;color:#000;transform:scaleX(0.93);transform-origin:right top;">2,000</div>
<div class="t" style="left:541px;top:238.34px;font:12px 'Liberation Sans', sans-serif;line-height:15px;color:#000;transform:scaleX(0.93);transform-origin:left top;">кг</div>
<div class="t" style="right:971px;top:257.34px;font:12px 'Liberation Sans', sans-serif;line-height:15px;color:#000;transform:scaleX(0.93);transform-origin:right top;">2</div>
<div class="t" style="left:49px;top:257.34px;font:12px 'Liberation Sans', sans-serif;line-height:15px;color:#000;transform:scaleX(0.93);transform-origin:left top;">01GT242083</div>
<div class="t" style="left:141px;top:257.34px;font:12px 'Liberation Sans', sans-serif;line-height:15px;color:#000;transform:scaleX(0.93);transform-origin:left top;letter-spacing:-0.14px">01GT242083 Process Yellow T...</div>
<div class="t" style="left:309px;top:257.34px;font:12px 'Liberation Sans', sans-serif;line-height:15px;color:#000;transform:scaleX(0.93);transform-origin:left top;">0486</div>
<div class="t" style="right:479px;top:257.34px;font:12px 'Liberation Sans', sans-serif;line-height:15px;color:#000;transform:scaleX(0.93);transform-origin:right top;">2,000</div>
<div class="t" style="left:541px;top:257.34px;font:12px 'Liberation Sans', sans-serif;line-height:15px;color:#000;transform:scaleX(0.93);transform-origin:left top;">кг</div>
<div class="r" style="left:349px;top:254px;width:15px;height:18px;background:linear-gradient(#fcfaf3,#efe9d3);border-left:1px solid #ddd6bd;box-sizing:border-box;"></div>
<svg class="r" style="left:352px;top:267px" width="11" height="2" viewBox="0 0 11 2"><rect x="0" y="0" width="2" height="2" fill="#6b5514"/><rect x="4" y="0" width="2" height="2" fill="#6b5514"/><rect x="8" y="0" width="2" height="2" fill="#6b5514"/></svg>
<div class="r" style="left:364px;top:254px;width:15px;height:18px;background:linear-gradient(#fcfaf3,#efe9d3);border-left:1px solid #ddd6bd;box-sizing:border-box;"></div>
<svg class="r" style="left:367px;top:259px" width="9" height="9" viewBox="0 0 9 9"><path d="M1 1L8 8M8 1L1 8" stroke="#6b5514" stroke-width="1.8" /></svg>
<div class="r" style="left:379px;top:254px;width:16px;height:18px;background:linear-gradient(#fcfaf3,#efe9d3);border-left:1px solid #ddd6bd;box-sizing:border-box;"></div>
<svg class="r" style="left:382px;top:257px" width="11" height="11" viewBox="0 0 11 11"><circle cx="4.6" cy="4" r="3.4" fill="none" stroke="#6b5514" stroke-width="1.15"/><path d="M7.1 6.6L9.9 9.4" stroke="#6b5514" stroke-width="1.9"/></svg>
<div class="t" style="left:12px;top:475.34px;font:12px 'Liberation Sans', sans-serif;line-height:15px;color:#40509a;transform:scaleX(0.93);transform-origin:left top;letter-spacing:-0.09px">100 EUR = 3 131,3092 грн., Тип цен: MICHAEL HUBER POLSKA</div>
<div class="t" style="left:983px;top:477.34px;font:bold 12px 'Liberation Sans', sans-serif;line-height:15px;color:#000;">00</div>
<div class="r" style="left:577px;top:108px;width:403px;height:377px;background:#c7c7cb;"></div>
<div class="r" style="left:579px;top:129px;width:398px;height:356px;background:#6e6e6e;"></div>
<div class="r" style="left:580px;top:130px;width:396px;height:355px;background:#fefbf3;"></div>
<svg class="r" style="left:582px;top:113px" width="13" height="12" viewBox="0 0 13 12"><rect x="0.5" y="0.5" width="12" height="11" fill="#fff" stroke="#8a9ab0"/><rect x="1" y="1" width="11" height="2.5" fill="#e8d870"/><path d="M4.5 1v10M8.5 1v10" stroke="#8a9ab0"/></svg>
<div class="t" style="left:601px;top:113.34px;font:bold 12px 'Liberation Sans', sans-serif;line-height:15px;color:#222;letter-spacing:0.08px">Выбор хара...: 01GT242083 Process Yellow Top Base</div>
<div class="r" style="left:922px;top:122px;width:8px;height:2px;background:#222;"></div>
<div class="r" style="left:940px;top:114px;width:11px;height:11px;border:1px solid #222;border-top-width:2px;box-sizing:border-box;"></div>
<svg class="r" style="left:961px;top:114px" width="11" height="11" viewBox="0 0 11 11"><path d="M1 1L10 10M10 1L1 10" stroke="#222" stroke-width="1.8" /></svg>
<div class="t" style="left:588px;top:138.34px;font:bold 12px 'Liberation Sans', sans-serif;line-height:15px;color:#7a5a0c;">Значения свойств для отбора характеристик номенклатуры</div>
<div class="r" style="left:588px;top:152px;width:380px;height:1px;background:#c8bf9f;"></div>
<svg class="r" style="left:592px;top:163px" width="16" height="16" viewBox="0 0 16 16"><defs><radialGradient id="gp" cx="40%" cy="35%" r="70%"><stop offset="0" stop-color="#c8e8b0"/><stop offset="1" stop-color="#64a04c"/></radialGradient></defs><circle cx="8" cy="8" r="7.4" fill="url(#gp)" stroke="#5c8c4c" stroke-width=".8"/><path d="M4.3 8h7.4M8 4.3v7.4" stroke="#fff" stroke-width="2.6"/></svg>
<svg class="r" style="left:617px;top:165px" width="12" height="12" viewBox="0 0 12 12"><path d="M1.8 1.8L10.2 10.2M10.2 1.8L1.8 10.2" stroke="#b83838" stroke-width="3.4" stroke-linecap="round"/><path d="M1.8 1.8L10.2 10.2M10.2 1.8L1.8 10.2" stroke="#f07070" stroke-width="2" stroke-linecap="round"/></svg>
<svg class="r" style="left:640px;top:165px" width="13" height="12" viewBox="0 0 13 12"><path d="M0.8 11.2L2 7.2 8.8 0.6 12.4 4 5.4 10.6z" fill="#58b038" stroke="#2c6a1c" stroke-width=".9"/><path d="M3 7.5L9.5 1.2" stroke="#a8e088" stroke-width="1"/><path d="M0.8 11.2l1.2-4 2.8 3z" fill="#204a18"/></svg>
<svg class="r" style="left:661px;top:163px" width="16" height="15" viewBox="0 0 16 15"><rect x="0.5" y="0.5" width="14" height="14" fill="#c8ccd4" stroke="#b8bcc6"/><rect x="2.5" y="1.5" width="10" height="4.5" fill="#dde0e6"/><path d="M4 3.5h7" stroke="#b8bcc6"/><text x="5" y="14.5" font-family="Liberation Sans" font-weight="bold" font-size="6.5" fill="#a8acb4">ок</text></svg>
<svg class="r" style="left:686px;top:163px" width="13" height="16" viewBox="0 0 13 16"><path d="M0.5 0.5h9l2.5 2.5v12.5h-11.5z" fill="#fff" stroke="#a8acb4"/><path d="M3.5 3c2 1.5 4 3 3.5 5.5L4.5 11.5" stroke="#4a9aa8" stroke-width="1.1" fill="none"/><path d="M2.5 13V9.8L5.6 12.4z" fill="#1a2a80"/></svg>
<div class="r" style="left:588px;top:183px;width:380px;height:172px;background:#fff;border:1px solid #b0ae96;box-sizing:border-box;"></div>
<div class="r" style="left:589px;top:184px;width:378px;height:21px;background:linear-gradient(#fbf7ea,#f2e8cc);border-bottom:1px solid #d8cfae;box-sizing:border-box;"></div>
<div class="r" style="left:620px;top:184px;width:1px;height:20px;background:#d9d0b0;"></div>
<div class="r" style="left:737px;top:184px;width:1px;height:20px;background:#d9d0b0;"></div>
<div class="r" style="left:589px;top:223px;width:378px;height:1px;background:#cfd6e6;"></div>
<div class="r" style="left:620px;top:204px;width:1px;height:19px;background:#d3d9e6;"></div>
<div class="r" style="left:621px;top:204px;width:116px;height:19px;background:#4862c8;outline:1px dotted #b0c0f0;outline-offset:-1px;"></div>
<div class="r" style="left:737px;top:204px;width:1px;height:19px;background:#d3d9e6;"></div>
<div class="t" style="left:625px;top:187.34px;font:12px 'Liberation Sans', sans-serif;line-height:15px;color:#3d3510;transform:scaleX(0.93);transform-origin:left top;">Свойство</div>
<div class="t" style="left:743px;top:187.34px;font:12px 'Liberation Sans', sans-serif;line-height:15px;color:#3d3510;transform:scaleX(0.93);transform-origin:left top;">Значение</div>
<div class="r" style="left:597px;top:213px;width:9px;height:3px;background:linear-gradient(#90a8e8,#3a58c0);border-radius:1px;"></div>
<div class="t" style="left:625px;top:208.34px;font:12px 'Liberation Sans', sans-serif;line-height:15px;color:#fff;transform:scaleX(0.93);transform-origin:left top;">SAP код</div>
<div class="t" style="left:588px;top:367.34px;font:bold 12px 'Liberation Sans', sans-serif;line-height:15px;color:#7a5a0c;">Характеристики, отобранные по значениям свойств</div>
<div class="r" style="left:588px;top:380px;width:380px;height:1px;background:#c8bf9f;"></div>
<svg class="r" style="left:592px;top:392px" width="16" height="16" viewBox="0 0 16 16"><defs><radialGradient id="gp" cx="40%" cy="35%" r="70%"><stop offset="0" stop-color="#c8e8b0"/><stop offset="1" stop-color="#64a04c"/></radialGradient></defs><circle cx="8" cy="8" r="7.4" fill="url(#gp)" stroke="#5c8c4c" stroke-width=".8"/><path d="M4.3 8h7.4M8 4.3v7.4" stroke="#fff" stroke-width="2.6"/></svg>
<svg class="r" style="left:617px;top:394px" width="12" height="12" viewBox="0 0 12 12"><path d="M1.8 1.8L10.2 10.2M10.2 1.8L1.8 10.2" stroke="#b83838" stroke-width="3.4" stroke-linecap="round"/><path d="M1.8 1.8L10.2 10.2M10.2 1.8L1.8 10.2" stroke="#f07070" stroke-width="2" stroke-linecap="round"/></svg>
<svg class="r" style="left:640px;top:394px" width="13" height="12" viewBox="0 0 13 12"><path d="M0.8 11.2L2 7.2 8.8 0.6 12.4 4 5.4 10.6z" fill="#58b038" stroke="#2c6a1c" stroke-width=".9"/><path d="M3 7.5L9.5 1.2" stroke="#a8e088" stroke-width="1"/><path d="M0.8 11.2l1.2-4 2.8 3z" fill="#204a18"/></svg>
<svg class="r" style="left:661px;top:392px" width="16" height="15" viewBox="0 0 16 15"><rect x="0.5" y="0.5" width="14" height="14" fill="#c8ccd4" stroke="#b8bcc6"/><rect x="2.5" y="1.5" width="10" height="4.5" fill="#dde0e6"/><path d="M4 3.5h7" stroke="#b8bcc6"/><text x="5" y="14.5" font-family="Liberation Sans" font-weight="bold" font-size="6.5" fill="#a8acb4">ок</text></svg>
<svg class="r" style="left:686px;top:392px" width="13" height="16" viewBox="0 0 13 16"><path d="M0.5 0.5h9l2.5 2.5v12.5h-11.5z" fill="#fff" stroke="#a8acb4"/><path d="M2 9.5L6.5 4.5" stroke="#c04040" stroke-width="1.1"/><path d="M4.5 3.5h3v3z" fill="#b02828"/><path d="M9 5c1.5 1.5 1 3.5-0.5 5" stroke="#3aa0b0" stroke-width="1.1" fill="none"/><path d="M10 8.5L5.5 12.5" stroke="#2a48a8" stroke-width="1.2"/><path d="M4.5 13.5v-3.2l3 3z" fill="#1a2a80"/></svg>
<svg class="r" style="left:707px;top:391px" width="17" height="17" viewBox="0 0 17 17"><rect x="3" y="0" width="10" height="14" fill="#b4b4ec"/><path d="M3 3.5h10M3 7h10M3 10.5h10" stroke="#f4f4ff" stroke-width="1"/><path d="M3 1.2h10" stroke="#8a8ad0" stroke-width=".6"/><rect x="0" y="6.5" width="8" height="2" fill="#7a7acc"/><path d="M0.5 7.5h7" stroke="#e8e8ff" stroke-width=".7"/><path d="M8.6 4.2V14.8L10.9 12.6L12.6 16.4L14.2 15.7L12.5 12H15.6Z" fill="#fff" stroke="#444" stroke-width=".9" stroke-linejoin="round"/></svg>
<div class="t" style="left:726px;top:392.34px;font:12px 'Liberation Sans', sans-serif;line-height:15px;color:#302a0c;transform:scaleX(0.93);transform-origin:left top;">Выбрать</div>
<div class="r" style="left:588px;top:411px;width:380px;height:80px;background:#fff;border:1px solid #b0ae96;box-sizing:border-box;"></div>
<div class="r" style="left:589px;top:412px;width:378px;height:21px;background:linear-gradient(#fbf7ea,#f2e8cc);border-bottom:1px solid #d8cfae;box-sizing:border-box;"></div>
<div class="r" style="left:620px;top:412px;width:1px;height:20px;background:#d9d0b0;"></div>
<div class="r" style="left:620px;top:432px;width:1px;height:38px;background:#d3d9e6;"></div>
<div class="r" style="left:589px;top:451px;width:378px;height:1px;background:#d3d9e6;"></div>
<div class="r" style="left:589px;top:470px;width:378px;height:1px;background:#d3d9e6;"></div>
<div class="r" style="left:621px;top:451px;width:346px;height:19px;background:#6b9bd3;"></div>
<div class="t" style="left:625px;top:415.34px;font:12px 'Liberation Sans', sans-serif;line-height:15px;color:#3d3510;transform:scaleX(0.93);transform-origin:left top;">Характеристика</div>
<div class="r" style="left:597px;top:440px;width:9px;height:3px;background:linear-gradient(#90a8e8,#3a58c0);border-radius:1px;"></div>
<div class="r" style="left:597px;top:459px;width:9px;height:3px;background:linear-gradient(#90a8e8,#3a58c0);border-radius:1px;"></div>
<div class="t" style="left:625px;top:436.34px;font:12px 'Liberation Sans', sans-serif;line-height:15px;color:#000;transform:scaleX(0.93);transform-origin:left top;">0485</div>
<div class="t" style="left:625px;top:455.34px;font:12px 'Liberation Sans', sans-serif;line-height:15px;color:#e8f0fa;transform:scaleX(0.93);transform-origin:left top;">0486</div>
</body></html>
